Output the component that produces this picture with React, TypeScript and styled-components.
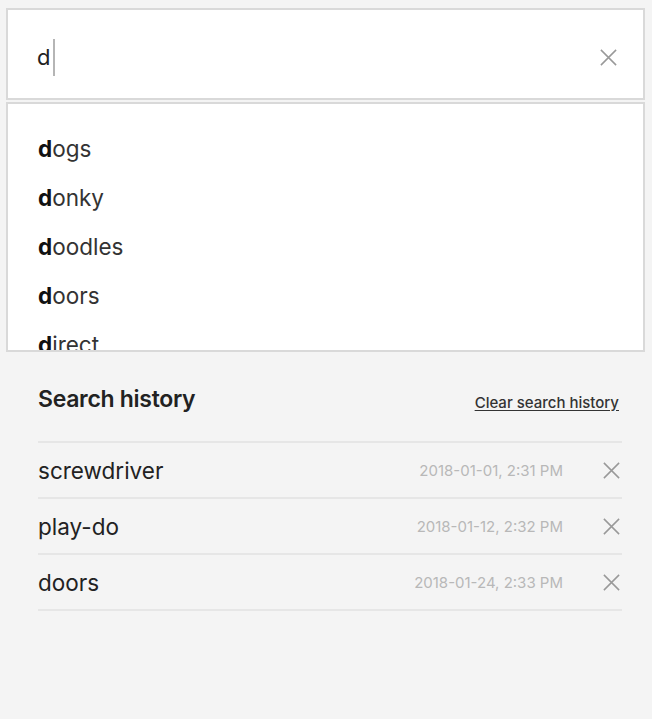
import React from "react";
import styled, { createGlobalStyle } from "styled-components";

const Global = createGlobalStyle`
  html, body { margin: 0; padding: 0; background: #f4f4f4; }
  body { font-family: Inter, Roboto, "Noto Sans", Arial, sans-serif; color: #222; }
`;

const Page = styled.div`
  min-height: 719px;
  box-sizing: border-box;
  padding: 8px 7px 0 6px;
  background: #f4f4f4;
`;

const SearchBox = styled.div`
  height: 92px;
  box-sizing: border-box;
  border: 2px solid #d9d9d9;
  background: #fff;
  display: flex;
  align-items: center;
  padding: 6px 24px 0 29px;
`;

const Query = styled.span`
  font-size: 22px;
  color: #222;
  line-height: 1;
`;

const Caret = styled.span`
  display: inline-block;
  width: 2px;
  height: 37px;
  background: #b5b5b5;
  margin-left: 3px;
`;

const Spacer = styled.div`
  flex: 1;
`;

const IconButton = styled.button`
  border: 0;
  background: transparent;
  padding: 0;
  width: 22px;
  height: 22px;
  display: flex;
  align-items: center;
  justify-content: center;
  cursor: pointer;
`;

const Dropdown = styled.div`
  margin-top: 2px;
  height: 250px;
  box-sizing: border-box;
  border: 2px solid #d9d9d9;
  background: #fff;
  overflow: hidden;
  padding: 20px 30px 0;
`;

const Suggestion = styled.div`
  height: 49px;
  display: flex;
  align-items: center;
  font-size: 22.5px;
  color: #333;
`;

const Match = styled.b`
  font-weight: 700;
  color: #111;
`;

const History = styled.section`
  padding: 0 23px 0 32px;
`;

const HistoryHeader = styled.div`
  display: flex;
  align-items: center;
  justify-content: space-between;
  height: 30px;
  margin-top: 32px;
  margin-bottom: 27px;
`;

const Title = styled.h2`
  margin: 0;
  font-size: 23px;
  font-weight: 600;
  color: #222;
  letter-spacing: -0.3px;
`;

const ClearLink = styled.a`
  font-size: 15px;
  font-weight: 500;
  color: #333;
  text-decoration: underline;
  text-underline-offset: 2px;
  margin-right: 3px;
  margin-top: 6px;
`;

const List = styled.ul`
  list-style: none;
  margin: 0;
  padding: 0;
  border-bottom: 2px solid #e6e6e6;
`;

const Row = styled.li`
  height: 56px;
  box-sizing: border-box;
  border-top: 2px solid #e6e6e6;
  display: flex;
  align-items: center;
`;

const Term = styled.span`
  flex: 1;
  font-size: 22.5px;
  color: #222;
`;

const Stamp = styled.span`
  font-size: 15px;
  color: #b8b8b8;
  margin-right: 37px;
`;

const Close = ({ size = 18, color = "#999" }: { size?: number; color?: string }) => (
  <svg width={size} height={size} viewBox="0 0 20 20" fill="none">
    <path d="M2 2 L18 18 M18 2 L2 18" stroke={color} strokeWidth="1.6" />
  </svg>
);

const suggestions = ["ogs", "onky", "oodles", "oors", "irect"];
const history = [
  { term: "screwdriver", when: "2018-01-01, 2:31 PM" },
  { term: "play-do", when: "2018-01-12, 2:32 PM" },
  { term: "doors", when: "2018-01-24, 2:33 PM" },
];

export default function App() {
  return (
    <>
      <Global />
      <Page>
        <SearchBox>
          <Query>d</Query>
          <Caret />
          <Spacer />
          <IconButton aria-label="Clear">
            <Close size={19} />
          </IconButton>
        </SearchBox>
        <Dropdown>
          {suggestions.map((s) => (
            <Suggestion key={s}>
              <Match>d</Match>
              {s}
            </Suggestion>
          ))}
        </Dropdown>
        <History>
          <HistoryHeader>
            <Title>Search history</Title>
            <ClearLink>Clear search history</ClearLink>
          </HistoryHeader>
          <List>
            {history.map((h) => (
              <Row key={h.term}>
                <Term>{h.term}</Term>
                <Stamp>{h.when}</Stamp>
                <IconButton aria-label="Remove">
                  <Close size={19} />
                </IconButton>
              </Row>
            ))}
          </List>
        </History>
      </Page>
    </>
  );
}
